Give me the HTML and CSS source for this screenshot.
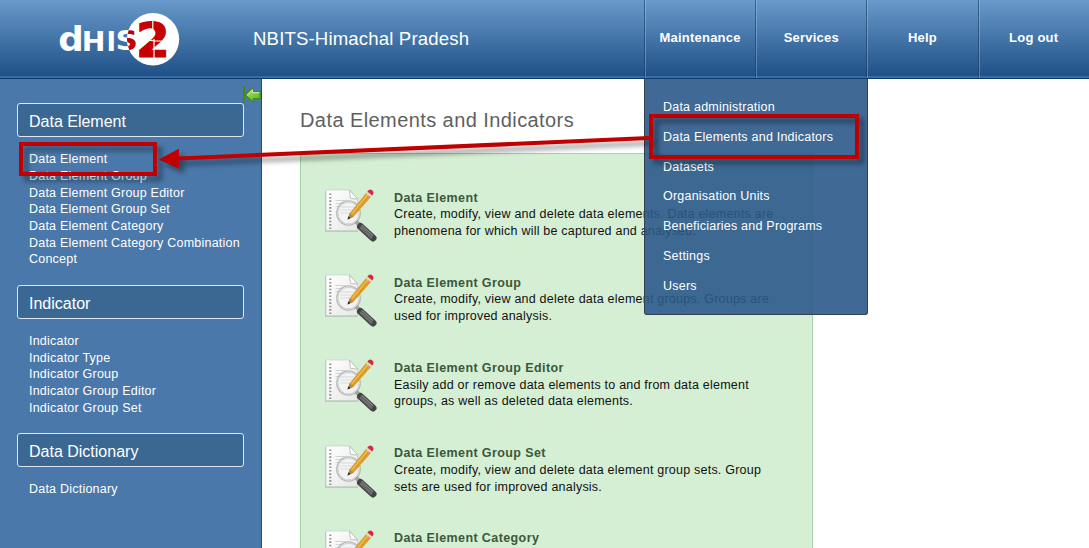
FILE: index.html
```html
<!DOCTYPE html>
<html lang="en">
<head>
<meta charset="utf-8">
<title>DHIS 2</title>
<link rel="stylesheet" href="styles.css">
</head>
<body>
<svg class="defs" width="0" height="0" aria-hidden="true">
  <defs>
    <linearGradient id="paper" x1="0" y1="0" x2="1" y2="1"><stop offset="0" stop-color="#fff"/><stop offset="1" stop-color="#e6e8e6"/></linearGradient>
    <linearGradient id="pencil" x1="0" y1="0" x2="1" y2="1"><stop offset="0" stop-color="#f0b445"/><stop offset="1" stop-color="#c98710"/></linearGradient>
    <symbol id="inspect" viewBox="0 0 54 54">
      <path d="M1 1.500H26l8 9V43H1z" fill="#9fb5a1" opacity=".55"/>
      <path d="M2 1H25.500l8 9V41.500H2z" fill="url(#paper)" stroke="#c4cbc4" stroke-width=".6"/>
      <path d="M25.500 1l1 8.500 7 .5z" fill="#fff" stroke="#aeb4ae" stroke-width=".8"/>
      <path d="M6.300 4.500V40" stroke="#8c908c" stroke-width="2" stroke-dasharray="1.600 1.800"/>
      <path d="M11.500 11.500h10M11.500 14.500h14M11.500 17.500h14" stroke="#cfd4d8" stroke-width="1"/>
      <ellipse cx="24.500" cy="24" rx="11.300" ry="11.700" fill="#f2f4f2" fill-opacity=".8" stroke="#b4b8b5" stroke-width="2.200"/>
      <ellipse cx="24.500" cy="24" rx="10.900" ry="11.300" fill="none" stroke="#e0e3e0" stroke-width="1"/>
      <path d="M17 18h13M16 21h15M16 24h10" stroke="#d8dcde" stroke-width="1"/>
      <path d="M32 32.500l4 4" stroke="#a2a5a2" stroke-width="4"/>
      <path d="M36.500 37.500L49 49" stroke="#444" stroke-width="7" stroke-linecap="round"/>
      <path d="M36.200 38L48 49" stroke="#6d6d6d" stroke-width="2.600"/>
      <path d="M37.800 36.300L49 46.800" stroke="#808080" stroke-width="1.400"/>
      <path d="M23.500 30.500l2.300-6.500L42.800 3l5 4L29.500 27.800z" fill="url(#pencil)"/>
      <path d="M27.800 24.800L44.800 4.500" stroke="#fccb70" stroke-width="1"/>
      <path d="M23.500 30.500l2.300-6.500 3.700 3.800z" fill="#b38b4c"/>
      <path d="M23.500 30.500l1.100-3.200 1.900 1.800z" fill="#222"/>
      <path d="M41.800 4.300l1.500-1.800 5 4-1.500 1.800z" fill="#d9d9d9"/>
      <path d="M43.300 2.500q2.500-3.300 5-1.100 2.500 2.100 0 5.100z" fill="#d52a38"/>
    </symbol>
  </defs>
</svg>

<header class="header">
  <svg class="logo" width="122" height="60" viewBox="59 6 122 60" role="img" aria-label="dhis2">
    <defs>
      <clipPath id="disc"><circle cx="153" cy="39.300" r="26"/></clipPath>
    </defs>
    <circle cx="153" cy="39.300" r="26.200" fill="#fff"/>
    <g class="wordmark" fill="#fff">
      <text transform="translate(58.200 50.500) scale(1.050 1)" font-size="34">d</text>
      <text transform="translate(81.800 50.500) scale(1.050 1)" font-size="27">H</text>
      <text transform="translate(106.500 50.500) scale(.95 1)" font-size="27">I</text>
      <text transform="translate(115.500 50.300) scale(1.200 1)" font-size="26">S</text>
    </g>
    <g class="wordmark" fill="#c40000">
      <g clip-path="url(#disc)" aria-hidden="true"><text transform="translate(115.500 50.300) scale(1.200 1)" font-size="26">S</text></g>
      <text transform="translate(136 57) scale(1.020 1)" font-size="47.500" stroke="#c40000" stroke-width="1.200">2</text>
    </g>
    <path d="M152.800 21v9M154 39v19M138 44.500l11-6.500M150 40.500l18 1" stroke="#fff" stroke-width="1.200"/>
  </svg>
  <div class="org">NBITS-Himachal Pradesh</div>
  <nav class="nav">
    <a class="tab">Maintenance</a>
    <a class="tab">Services</a>
    <a class="tab">Help</a>
    <a class="tab">Log out</a>
    <div class="menu">
      <a>Data administration</a>
      <a>Data Elements and Indicators</a>
      <a>Datasets</a>
      <a>Organisation Units</a>
      <a>Beneficiaries and Programs</a>
      <a>Settings</a>
      <a>Users</a>
    </div>
  </nav>
</header>

<div class="page">
  <aside class="sidebar">
    <svg class="collapse" width="18" height="18" viewBox="0 0 18 18">
      <defs><linearGradient id="leaf" x1="0" y1="0" x2="1" y2="1"><stop offset="0" stop-color="#b8e878"/><stop offset="1" stop-color="#4fae16"/></linearGradient></defs>
      <path d="M1 0v17" stroke="#4c8418" stroke-width="2"/>
      <path d="M2.300 9L10.300 1.300V5.500H17.300V12.500H10.300V16.300z" fill="url(#leaf)" stroke="#438b18" stroke-width="1.200"/>
      <path d="M4.200 9L9.300 4V6.700H16" fill="none" stroke="#d4f2a4" stroke-width="1"/>
    </svg>
    <section>
      <h2>Data Element</h2>
      <ul>
        <li>Data Element</li>
        <li>Data Element Group</li>
        <li>Data Element Group Editor</li>
        <li>Data Element Group Set</li>
        <li>Data Element Category</li>
        <li>Data Element Category Combination</li>
        <li>Concept</li>
      </ul>
    </section>
    <section>
      <h2>Indicator</h2>
      <ul>
        <li>Indicator</li>
        <li>Indicator Type</li>
        <li>Indicator Group</li>
        <li>Indicator Group Editor</li>
        <li>Indicator Group Set</li>
      </ul>
    </section>
    <section>
      <h2>Data Dictionary</h2>
      <ul>
        <li>Data Dictionary</li>
      </ul>
    </section>
  </aside>

  <main class="content">
    <h1>Data Elements and Indicators</h1>
    <div class="panel">
      <article>
        <svg class="icon"><use href="#inspect"/></svg>
        <div><h3>Data Element</h3><p>Create, modify, view and delete data elements. Data elements are<br>phenomena for which will be captured and analysed.</p></div>
      </article>
      <article>
        <svg class="icon"><use href="#inspect"/></svg>
        <div><h3>Data Element Group</h3><p>Create, modify, view and delete data element groups. Groups are<br>used for improved analysis.</p></div>
      </article>
      <article>
        <svg class="icon"><use href="#inspect"/></svg>
        <div><h3>Data Element Group Editor</h3><p>Easily add or remove data elements to and from data element<br>groups, as well as deleted data elements.</p></div>
      </article>
      <article>
        <svg class="icon"><use href="#inspect"/></svg>
        <div><h3>Data Element Group Set</h3><p>Create, modify, view and delete data element group sets. Group<br>sets are used for improved analysis.</p></div>
      </article>
      <article>
        <svg class="icon"><use href="#inspect"/></svg>
        <div><h3>Data Element Category</h3></div>
      </article>
    </div>
  </main>
</div>

<svg class="callouts" width="1089" height="548" viewBox="0 0 1089 548" aria-hidden="true">
  <g fill="none" stroke="#c00000" stroke-width="4">
    <rect x="21" y="144" width="134" height="30"/>
    <rect x="651" y="116" width="206" height="41"/>
    <path d="M178 158.500L649 138"/>
  </g>
  <path d="M158.500 159.500L179 148.800V168.500z" fill="#c00000"/>
</svg>
</body>
</html>
```
FILE: styles.css
```css
* { box-sizing: border-box; margin: 0; padding: 0; }

body {
  width: 1089px;
  height: 548px;
  overflow: hidden;
  position: relative;
  background: #fff;
  font: 12.5px/16.67px "Liberation Sans", Arial, sans-serif;
  letter-spacing: 0.22px;
}

.defs { position: absolute; }

.header {
  display: flex;
  height: 79px;
  position: relative;
  z-index: 2;
  color: #fff;
  background: linear-gradient(#6999ca, #1f5187 76px);
  border-bottom: 1px solid #063b73;
  box-shadow: inset 0 -2px #3c6b9e;
}

.logo { margin: 6px 0 0 59px; flex: none; overflow: visible; }
.wordmark { font-family: "DejaVu Sans", sans-serif; font-weight: bold; letter-spacing: 0; }

.org {
  margin-left: 72px;
  width: 391px;
  flex: none;
  font-size: 18.6px;
  line-height: 77px;
  letter-spacing: 0.15px;
}

.nav { display: flex; width: 445px; flex: none; position: relative; }

.tab {
  width: 111.2px;
  flex: none;
  border-left: 1px solid rgba(25, 60, 100, .6);
  box-shadow: inset 1px 0 rgba(180, 210, 240, .35);
  text-align: center;
  font-size: 13px;
  font-weight: bold;
  line-height: 76px;
}

.menu {
  position: absolute;
  top: 79px;
  left: 0;
  width: 224px;
  height: 236px;
  padding: 14px 0 0 18px;
  background: rgba(43, 89, 137, .9);
  border: 1px solid #343f50;
  border-top: 0;
  border-radius: 0 0 3px 3px;
}

.menu a { display: block; line-height: 29.8px; }

.page { display: flex; height: 469px; overflow: hidden; }

.sidebar {
  position: relative;
  width: 262px;
  flex: none;
  padding: 24px 17px 0;
  background: #4a78aa;
  border-right: 1px solid #214c80;
  color: #fff;
}

.sidebar h2 {
  height: 34px;
  padding-left: 11px;
  border: 1px solid #e0e7ef;
  border-radius: 3px;
  background: #3b6893;
  font-size: 16px;
  font-weight: normal;
  line-height: 35px;
  letter-spacing: 0;
}

.sidebar ul { list-style: none; padding: 14.4px 0 16.6px 12px; }
.sidebar li { white-space: nowrap; }
.collapse { position: absolute; left: 243px; top: 7px; }

.content { padding: 29px 0 0 38px; }

.content h1 {
  font-size: 20px;
  font-weight: normal;
  line-height: 24px;
  letter-spacing: 0.42px;
  color: #5f5f5f;
}

.panel {
  width: 513px;
  height: 395px;
  margin-top: 21px;
  padding: 35px 0 0 23px;
  background: #d5efd5;
  border: 1px solid #a5d3a5;
  border-bottom: 0;
  overflow: hidden;
}

.panel article { display: flex; gap: 16px; height: 85.2px; }
.panel article > div { padding-top: 0.6px; }
.icon { width: 54px; height: 54px; flex: none; }
.panel h3 { font-size: 12.5px; color: #3a583a; letter-spacing: 0.4px; }
.panel p { color: #111; }

.callouts {
  position: absolute;
  left: 0;
  top: 0;
  z-index: 3;
  filter: drop-shadow(5px 5px 2.5px rgba(0, 0, 0, .4));
}
```
